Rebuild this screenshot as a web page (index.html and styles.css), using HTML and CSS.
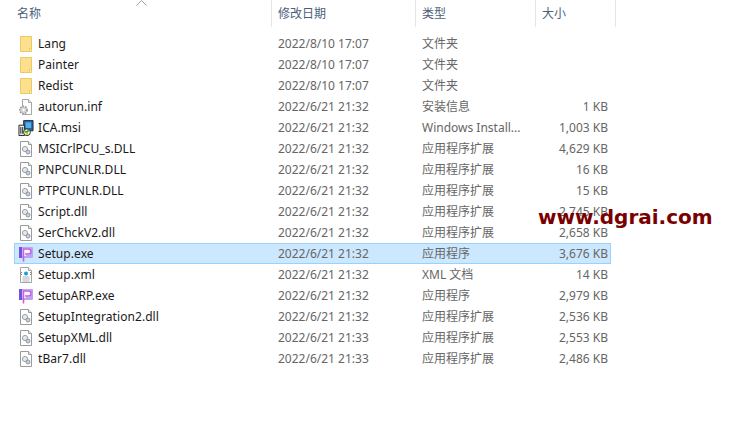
FILE: index.html
```html
<!DOCTYPE html>
<html lang="en">
<head>
    <meta charset="UTF-8">
    <meta name="viewport" content="width=device-width, initial-scale=1.0">
    <title>Setup folder</title>
    <link rel="stylesheet" href="styles.css">
</head>
<body>
    <svg class="sprites" width="0" height="0">
        <symbol id="i-folder" viewBox="0 0 16 18">
            <path d="M2.5 1.5h11v15h-11z" fill="#fce08e" stroke="#ecca62"/>
            <path d="M11.5 16.5v-3h2v3z" fill="#fff3c8" stroke="#ecca62"/>
        </symbol>
        <symbol id="i-dll" viewBox="0 0 16 18">
            <path d="M2.5 1.5h8l3 3v12h-11z" fill="#fff" stroke="#9a9a9a"/>
            <path d="M10.5 1.5v3h3" fill="#eee" stroke="#9a9a9a"/>
            <circle cx="7" cy="9" r="2.6" fill="#e4e7eb" stroke="#9aa2ac"/>
            <circle cx="10" cy="12" r="2" fill="#c4d2e2" stroke="#8d97a3"/>
        </symbol>
        <symbol id="i-inf" viewBox="0 0 16 18">
            <path d="M4.500 1.500h6l3 3v12h-9z" fill="#fff" stroke="#a5a5a5"/>
            <path d="M10.500 1.500v3h3" fill="#eee" stroke="#a5a5a5"/>
            <circle cx="5.500" cy="12" r="3.600" fill="#d4d4d4" stroke="#999" stroke-width="1.600" stroke-dasharray="1.600 1"/>
            <circle cx="5.500" cy="12" r="1.200" fill="#fff"/>
        </symbol>
        <symbol id="i-msi" viewBox="0 0 17 18">
            <path d="M6 1h10v11H6z" fill="#2f5f9e" stroke="#1c2c4c"/>
            <path d="M8 3h6v6H8z" fill="#4fb4ee"/>
            <path d="M1 6h6v11H1z" fill="#e6e6e6" stroke="#222"/>
            <path d="M3 8v7M5 8v7" stroke="#222"/>
            <circle cx="9.500" cy="13.500" r="3.600" fill="#fff" stroke="#222"/>
            <path d="M7 12.500l2.500 1 2-2.500" stroke="#36b02c" stroke-width="2" fill="none"/>
            <circle cx="9.500" cy="15" r="1.300" fill="#e4c31c"/>
        </symbol>
        <symbol id="i-app" viewBox="0 0 16 16">
            <rect x="1" y="1" width="14" height="11" rx="1" fill="#b9a6ef"/>
            <rect x="1" y="1" width="3" height="11" fill="#6d55dc"/>
            <path d="M4.500 2.500h6c2 0 3 1 3 3s-1 3.200-3 3.200H8V10H4.500z" fill="#fff"/>
            <path d="M5.500 15.500V3h5c1.700 0 2.500.9 2.500 2.500S12.200 8 10.500 8H7" fill="none" stroke="#c95be6" stroke-width="1.600"/>
        </symbol>
        <symbol id="i-xml" viewBox="0 0 16 18">
            <path d="M2.500 1.500h8l3 3v12h-11z" fill="#fff" stroke="#a5a5a5"/>
            <path d="M10.500 1.500v3h3" fill="#eee" stroke="#a5a5a5"/>
            <path d="M4 6l-1.500 1.500L4 9M12 6l1.500 1.500L12 9" stroke="#7b8794" fill="none"/>
            <circle cx="8" cy="7.500" r="2" fill="#1f9ad6"/>
            <path d="M4.500 11h7M4.500 13h7M4.500 15h7" stroke="#a9b2bc"/>
        </symbol>
    </svg>

    <div class="explorer">
        <div class="sort-arrow">
            <svg width="11" height="6" viewBox="0 0 11 6"><path d="M.5 5.500l5-5 5 5" fill="none" stroke="#9aa3ad"/></svg>
        </div>
        <div class="header">
            <div class="col-title col-name">名称</div>
            <div class="col-title">修改日期</div>
            <div class="col-title">类型</div>
            <div class="col-title">大小</div>
        </div>

        <div class="rows">
            <div class="row"><div class="name"><svg class="icon"><use href="#i-folder"/></svg>Lang</div><div>2022/8/10 17:07</div><div>文件夹</div><div class="size"></div></div>
            <div class="row"><div class="name"><svg class="icon"><use href="#i-folder"/></svg>Painter</div><div>2022/8/10 17:07</div><div>文件夹</div><div class="size"></div></div>
            <div class="row"><div class="name"><svg class="icon"><use href="#i-folder"/></svg>Redist</div><div>2022/8/10 17:07</div><div>文件夹</div><div class="size"></div></div>
            <div class="row"><div class="name"><svg class="icon"><use href="#i-inf"/></svg>autorun.inf</div><div>2022/6/21 21:32</div><div>安装信息</div><div class="size">1 KB</div></div>
            <div class="row"><div class="name"><svg class="icon"><use href="#i-msi"/></svg>ICA.msi</div><div>2022/6/21 21:32</div><div>Windows Install...</div><div class="size">1,003 KB</div></div>
            <div class="row"><div class="name"><svg class="icon"><use href="#i-dll"/></svg>MSICrlPCU_s.DLL</div><div>2022/6/21 21:32</div><div>应用程序扩展</div><div class="size">4,629 KB</div></div>
            <div class="row"><div class="name"><svg class="icon"><use href="#i-dll"/></svg>PNPCUNLR.DLL</div><div>2022/6/21 21:32</div><div>应用程序扩展</div><div class="size">16 KB</div></div>
            <div class="row"><div class="name"><svg class="icon"><use href="#i-dll"/></svg>PTPCUNLR.DLL</div><div>2022/6/21 21:32</div><div>应用程序扩展</div><div class="size">15 KB</div></div>
            <div class="row"><div class="name"><svg class="icon"><use href="#i-dll"/></svg>Script.dll</div><div>2022/6/21 21:32</div><div>应用程序扩展</div><div class="size">2,745 KB</div></div>
            <div class="row"><div class="name"><svg class="icon"><use href="#i-dll"/></svg>SerChckV2.dll</div><div>2022/6/21 21:32</div><div>应用程序扩展</div><div class="size">2,658 KB</div></div>
            <div class="row selected"><div class="name"><svg class="icon"><use href="#i-app"/></svg>Setup.exe</div><div>2022/6/21 21:32</div><div>应用程序</div><div class="size">3,676 KB</div></div>
            <div class="row"><div class="name"><svg class="icon"><use href="#i-xml"/></svg>Setup.xml</div><div>2022/6/21 21:32</div><div>XML 文档</div><div class="size">14 KB</div></div>
            <div class="row"><div class="name"><svg class="icon"><use href="#i-app"/></svg>SetupARP.exe</div><div>2022/6/21 21:32</div><div>应用程序</div><div class="size">2,979 KB</div></div>
            <div class="row"><div class="name"><svg class="icon"><use href="#i-dll"/></svg>SetupIntegration2.dll</div><div>2022/6/21 21:32</div><div>应用程序扩展</div><div class="size">2,536 KB</div></div>
            <div class="row"><div class="name"><svg class="icon"><use href="#i-dll"/></svg>SetupXML.dll</div><div>2022/6/21 21:33</div><div>应用程序扩展</div><div class="size">2,553 KB</div></div>
            <div class="row"><div class="name"><svg class="icon"><use href="#i-dll"/></svg>tBar7.dll</div><div>2022/6/21 21:33</div><div>应用程序扩展</div><div class="size">2,486 KB</div></div>
        </div>

        <div class="watermark">www.dgrai.com</div>
    </div>
</body>
</html>
```

FILE: styles.css
```css
body {
    margin: 0;
    background-color: white;
    font-family: "Noto Sans", "Noto Sans CJK SC", sans-serif;
    font-size: 12px;
    color: #666;
}
.sprites {
    display: block;
}
.explorer {
    position: relative;
    width: 738px;
    height: 448px;
    overflow: hidden;
}
.sort-arrow {
    position: absolute;
    left: 136px;
    top: 0;
    line-height: 0;
}
.header {
    display: grid;
    grid-template-columns: 272px 144px 120px 80px;
    width: 616px;
    height: 27px;
    margin-bottom: 6px;
}
.col-title {
    padding: 1px 0 0 6px;
    border-right: 1px solid #e5e5e5;
    line-height: 26px;
    color: #4c607a;
}
.col-name {
    padding-left: 17px;
    border-right: 1px solid #e5e5e5;
}
.rows {
    width: 597px;
    margin-left: 14px;
}
.row {
    display: grid;
    grid-template-columns: 257px 144px 120px 76px;
    box-sizing: border-box;
    height: 21px;
    line-height: 21px;
    border: 1px solid transparent;
}
.row > div {
    margin-top: -1px;
    padding-left: 6px;
    white-space: nowrap;
}
.row .name {
    display: flex;
    align-items: center;
    height: 21px;
    padding-left: 3px;
    letter-spacing: 0.06px;
    color: #1a1a1a;
}
.row .size {
    padding: 0 4px 0 0;
    text-align: right;
}
.selected {
    background-color: #cce8ff;
    border-color: #99d1ff;
}
.icon {
    flex: none;
    width: 16px;
    height: 18px;
    margin-right: 4px;
}
.watermark {
    position: absolute;
    left: 538px;
    top: 204px;
    font-family: "DejaVu Sans", sans-serif;
    font-size: 20px;
    font-weight: bold;
    line-height: 26px;
    color: #7a0000;
    white-space: nowrap;
}
```
